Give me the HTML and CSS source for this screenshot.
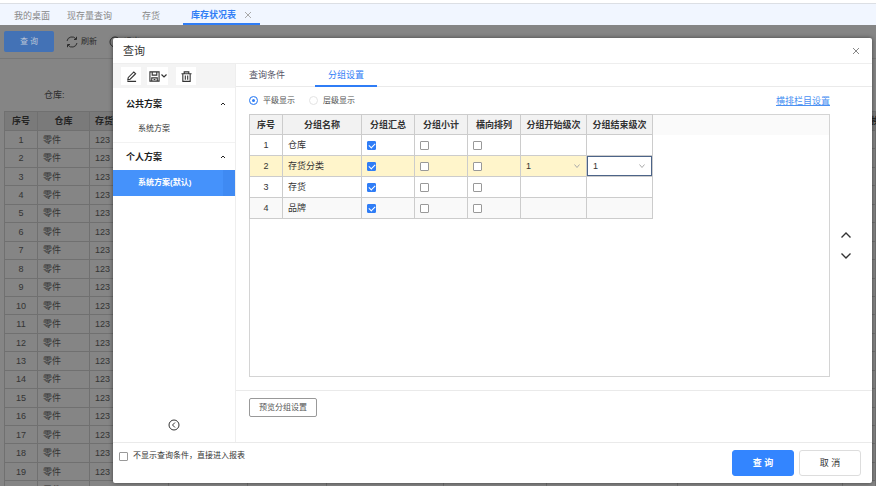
FILE: index.html
```html
<!DOCTYPE html>
<html lang="zh-CN">
<head>
    <meta charset="UTF-8">
    <meta name="viewport" content="width=device-width, initial-scale=1.0">
    <title>库存状况表</title>
    <link rel="stylesheet" href="styles.css">
</head>
<body>
<nav class="page-tabs">
    <a class="page-tab tab-desk" href="#">我的桌面</a>
    <a class="page-tab tab-query" href="#">现存量查询</a>
    <a class="page-tab tab-stock" href="#">存货</a>
    <a class="page-tab active" href="#">库存状况表
        <svg class="tab-close" viewBox="0 0 8 8"><path d="M1 1l6 6M7 1L1 7"/></svg>
    </a>
</nav>

<div class="workspace">
    <div class="toolbar">
        <button class="tool-primary">查 询</button>
        <button class="tool">
            <svg class="tool-icon" viewBox="0 0 12 12"><path d="M1 5a5 5 0 0 1 9-2M11 7a5 5 0 0 1-9 2M10.500.800v2.700H8M1.500 11.200V8.500H4"/></svg>
            刷新
        </button>
        <button class="tool">
            <svg class="tool-icon" viewBox="0 0 12 12"><circle cx="6" cy="6" r="5"/></svg>
            退出
        </button>
    </div>
    <div class="filter">仓库:</div>
    <div class="report">
        <table class="report-table">
            <colgroup>
                <col class="r-no"><col class="r-store"><col class="r-mid"><col class="r-mid"><col class="r-mid">
                <col class="r-wide"><col class="r-name"><col class="r-spec"><col class="r-long"><col>
            </colgroup>
            <thead>
            <tr><th>序号</th><th>仓库</th><th class="left">存货编码</th><th></th><th></th><th></th><th></th><th></th><th></th><th class="unit">换</th></tr>
            </thead>
            <tbody id="reportBody"></tbody>
        </table>
    </div>

    <div class="mask"></div>

    <div class="dialog" role="dialog" aria-labelledby="dialogTitle">
        <div class="dialog-header">
            <h1 id="dialogTitle">查询</h1>
            <button class="icon-btn" aria-label="关闭">
                <svg class="close-icon" viewBox="0 0 8 8"><path d="M1 1l6 6M7 1L1 7"/></svg>
            </button>
        </div>

        <div class="dialog-body">
            <aside class="sidebar">
                <div class="scheme-tools">
                    <button class="scheme-btn" aria-label="编辑">
                        <svg viewBox="0 0 12 12"><path d="M2 9.500l.500-2.500L8.500 1l2 2-6 6zM1.500 11.300h9.500"/></svg>
                    </button>
                    <button class="scheme-btn save" aria-label="保存">
                        <svg viewBox="0 0 12 12"><path d="M1 1h10v10H1zM3.500 1v3.500h5V1M3 11V7.500h6V11M5 9.300h2"/></svg>
                        <svg class="drop-icon" viewBox="0 0 6 6"><path d="M.500 1.500L3 4l2.500-2.500"/></svg>
                    </button>
                    <button class="scheme-btn" aria-label="删除">
                        <svg viewBox="0 0 12 12"><path d="M.500 3h11M3.500 3V1h5v2M2 3v8.300h8V3M4.700 5v4.500M7.300 5v4.500"/></svg>
                    </button>
                </div>
                <div class="scheme-group">公共方案
                    <svg class="fold-icon" viewBox="0 0 8 8"><path d="M2 5l2-2 2 2"/></svg>
                </div>
                <a class="scheme" href="#">系统方案</a>
                <div class="scheme-group">个人方案
                    <svg class="fold-icon" viewBox="0 0 8 8"><path d="M2 5l2-2 2 2"/></svg>
                </div>
                <a class="scheme selected" href="#">系统方案(默认)</a>
                <button class="icon-btn collapse" aria-label="收起">
                    <svg viewBox="0 0 12 12"><circle cx="6" cy="6" r="5"/><path d="M7 3.500L4.500 6 7 8.500"/></svg>
                </button>
            </aside>

            <main class="content">
                <div class="tabs">
                    <a class="tab" href="#">查询条件</a>
                    <a class="tab active" href="#">分组设置</a>
                </div>
                <div class="options">
                    <label class="radio"><input type="radio" name="mode" checked>平级显示</label>
                    <label class="radio"><input type="radio" name="mode">层级显示</label>
                    <a class="column-link" href="#">横排栏目设置</a>
                </div>
                <div class="group-area">
                    <div class="group-panel">
                        <table class="group-table">
                            <colgroup>
                                <col class="g-no"><col class="g-name"><col class="g-check"><col class="g-check"><col class="g-check">
                                <col class="g-level"><col class="g-level">
                            </colgroup>
                            <thead>
                            <tr><th>序号</th><th>分组名称</th><th>分组汇总</th><th>分组小计</th><th>横向排列</th><th>分组开始级次</th><th>分组结束级次</th></tr>
                            </thead>
                            <tbody>
                            <tr>
                                <td class="no">1</td><td>仓库</td>
                                <td><input type="checkbox" aria-label="分组汇总" checked></td>
                                <td><input type="checkbox" aria-label="分组小计"></td>
                                <td><input type="checkbox" aria-label="横向排列"></td>
                                <td></td><td></td>
                            </tr>
                            <tr class="current">
                                <td class="no">2</td><td>存货分类</td>
                                <td><input type="checkbox" aria-label="分组汇总" checked></td>
                                <td><input type="checkbox" aria-label="分组小计"></td>
                                <td><input type="checkbox" aria-label="横向排列"></td>
                                <td class="level">
                                    <div class="picker">
                                        <select aria-label="分组开始级次"><option>1</option></select>
                                        <svg viewBox="0 0 6 6"><path d="M.500 1.500L3 4.500l2.500-3"/></svg>
                                    </div>
                                </td>
                                <td class="level">
                                    <div class="picker editing">
                                        <select aria-label="分组结束级次"><option>1</option></select>
                                        <svg viewBox="0 0 6 6"><path d="M.500 1.500L3 4.500l2.500-3"/></svg>
                                    </div>
                                </td>
                            </tr>
                            <tr>
                                <td class="no">3</td><td>存货</td>
                                <td><input type="checkbox" aria-label="分组汇总" checked></td>
                                <td><input type="checkbox" aria-label="分组小计"></td>
                                <td><input type="checkbox" aria-label="横向排列"></td>
                                <td></td><td></td>
                            </tr>
                            <tr class="striped">
                                <td class="no">4</td><td>品牌</td>
                                <td><input type="checkbox" aria-label="分组汇总" checked></td>
                                <td><input type="checkbox" aria-label="分组小计"></td>
                                <td><input type="checkbox" aria-label="横向排列"></td>
                                <td></td><td></td>
                            </tr>
                            </tbody>
                        </table>
                        <div class="group-rest"></div>
                    </div>
                    <div class="sorter">
                        <button class="icon-btn" aria-label="上移">
                            <svg viewBox="0 0 12 12"><path d="M1.500 8.500L6 4l4.500 4.500"/></svg>
                        </button>
                        <button class="icon-btn" aria-label="下移">
                            <svg viewBox="0 0 12 12"><path d="M1.500 3.500L6 8l4.500-4.500"/></svg>
                        </button>
                    </div>
                </div>
                <div class="preview">
                    <button class="preview-btn">预览分组设置</button>
                </div>
            </main>
        </div>

        <div class="dialog-footer">
            <label class="skip"><input type="checkbox">不显示查询条件，直接进入报表</label>
            <button class="btn primary">查 询</button>
            <button class="btn">取 消</button>
        </div>
    </div>
</div>

<script>
    const reportBody = document.getElementById('reportBody');

    for (let i = 1; i <= 20; i++) {
        const row = document.createElement('tr');
        row.innerHTML = `<td class="no">${i}</td><td>零件</td><td>123</td>` + '<td></td>'.repeat(7);
        reportBody.appendChild(row);
    }
</script>
</body>
</html>
```

FILE: styles.css
```css
* { box-sizing: border-box; }
body {
    margin: 0;
    height: 100vh;
    display: flex;
    flex-direction: column;
    overflow: hidden;
    background: #fff;
    color: #333;
    font: 9px/12px "Liberation Sans", "Noto Sans CJK SC", sans-serif;
}
a { color: inherit; text-decoration: none; }
button, select, input { font: inherit; color: inherit; margin: 0; }
button { padding: 0; border: none; background: none; cursor: pointer; }
svg { display: block; fill: none; stroke: currentColor; }

/* page tabs */
.page-tabs {
    display: flex;
    flex: none;
    height: 25px;
    border-top: 3px solid #fff;
    background: #f1f6ff;
    box-shadow: inset 0 1px #dcdfe4;
    color: #888;
}
.page-tab { display: flex; align-items: center; padding-top: 3px; }
.tab-desk { padding-left: 14px; }
.tab-query { padding-left: 17px; }
.tab-stock { padding-left: 30px; }
.page-tab.active {
    gap: 8px;
    margin-left: 23px;
    padding: 4px 8px 0;
    border-bottom: 2px solid #2f7df6;
    color: #2f7df6;
    font-weight: bold;
}
.tab-close { width: 8px; height: 8px; stroke: #aaa; }

/* report under the mask */
.workspace {
    position: relative;
    flex: 1;
    min-height: 0;
    display: flex;
    flex-direction: column;
    overflow: hidden;
}
.toolbar {
    display: flex;
    flex: none;
    align-items: center;
    gap: 12px;
    height: 34px;
    padding-left: 4px;
    border-bottom: 1px solid #e4e4e4;
}
.tool-primary {
    position: relative;
    z-index: 1;
    width: 50px;
    height: 21px;
    border-radius: 2px;
    background: #4372b6;
    color: #bcc6d6;
    font-size: 8px;
}
.tool { display: flex; align-items: center; gap: 3px; color: #555; font-size: 8px; }
.tool-icon { width: 12px; height: 12px; }
.filter { flex: none; height: 52px; padding: 30px 0 0 44px; color: #555; }
.report { padding-left: 4px; }
.report-table {
    width: 100%;
    height: 389px;
    border-collapse: collapse;
    table-layout: fixed;
    color: #666;
}
.report-table th, .report-table td {
    padding: 0 5px;
    border: 1px solid #d6d6d6;
    text-align: left;
    white-space: nowrap;
}
.report-table th { height: 19px; background: #eaeaea; color: #444; text-align: center; }
.report-table th.left { text-align: left; }
.report-table th.unit { padding: 0 0 0 28px; text-align: left; }
.report-table td.no { text-align: center; }
.r-no { width: 33px; }
.r-store { width: 52px; }
.r-mid { width: 79px; }
.r-wide { width: 117px; }
.r-name { width: 103px; }
.r-spec { width: 131px; }
.r-long { width: 165px; }

.mask { position: absolute; inset: 0; background: rgba(0, 0, 0, 0.48); }

/* dialog */
.dialog {
    position: absolute;
    z-index: 2;
    inset: 13px 4px 3px 113px;
    display: flex;
    flex-direction: column;
    border-radius: 2px;
    background: #fff;
    box-shadow: 0 0 4px rgba(0, 0, 0, 0.5);
}
.dialog-header {
    display: flex;
    flex: none;
    align-items: center;
    justify-content: space-between;
    height: 26px;
    padding: 0 12px 0 10px;
    border-bottom: 1px solid #eee;
}
.dialog-header h1 { margin: 0; font-size: 11px; font-weight: normal; }
.close-icon { width: 8px; height: 8px; stroke: #888; }
.dialog-body { display: flex; flex: 1; min-height: 0; }

/* schemes */
.sidebar {
    display: flex;
    flex: none;
    flex-direction: column;
    width: 123px;
    border-right: 1px solid #eee;
}
.scheme-tools {
    display: flex;
    gap: 6px;
    height: 24px;
    padding: 3px 8px 0;
    background: #f4f4f4;
}
.scheme-btn {
    display: flex;
    align-items: center;
    justify-content: center;
    width: 20px;
    height: 18px;
    background: #fff;
}
.scheme-btn svg { width: 11px; height: 11px; stroke-width: 1.2; }
.scheme-btn.save { gap: 1px; width: 21px; margin-right: 2px; }
.scheme-btn .drop-icon { width: 6px; height: 6px; }
.scheme-group {
    display: flex;
    align-items: center;
    justify-content: space-between;
    height: 28px;
    padding: 3px 8px 0 13px;
    color: #222;
    font-weight: bold;
}
.fold-icon { width: 8px; height: 8px; }
.scheme {
    display: flex;
    align-items: center;
    height: 26px;
    padding-left: 25px;
    font-size: 8px;
}
.scheme + .scheme-group { padding-top: 0; border-top: 1px solid #f2f2f2; }
.scheme.selected {
    border-right: 12px solid #3f8af3;
    background: #4592fb;
    color: #fff;
    font-weight: bold;
}
.collapse { margin: auto auto 11px; }
.collapse svg { width: 12px; height: 12px; }

/* group settings */
.content { display: flex; flex: 1; flex-direction: column; min-width: 0; }
.tabs {
    display: flex;
    flex: none;
    height: 23px;
    padding-left: 13px;
    border-bottom: 1px solid #eaeaea;
}
.tab { display: flex; align-items: center; color: #556; }
.tab.active {
    margin: 0 0 -1px 30px;
    padding: 0 13px;
    border-bottom: 2px solid #2f7df6;
    color: #2f7df6;
}
.options {
    display: flex;
    flex: none;
    align-items: center;
    gap: 14px;
    height: 27px;
    padding: 0 42px 0 13px;
    font-size: 8px;
}
.radio { display: flex; align-items: center; gap: 5px; color: #555; }
.radio input {
    appearance: none;
    width: 9px;
    height: 9px;
    border: 1px solid #e4e4e4;
    border-radius: 50%;
}
.radio input:checked {
    border-color: #4a8ff5;
    background: #2f7df6;
    box-shadow: inset 0 0 0 2px #fff;
}
.column-link {
    margin-left: auto;
    color: #4a90f2;
    font-size: 9px;
    text-decoration: underline;
}
.group-area { display: flex; flex: 1; min-height: 0; padding: 0 0 13px 13px; }
.group-panel { display: flex; flex: 1; align-items: flex-start; border: 1px solid #d4d4d4; }
.group-table {
    flex: none;
    width: 402px;
    margin: -1px 0 0 -1px;
    border-collapse: collapse;
    table-layout: fixed;
}
.group-table th, .group-table td { height: 21px; padding: 0 5px; border: 1px solid #ccc; color: #333; }
.group-table th { height: 20px; padding: 0; background: #f2f2f2; }
.group-table td.no { text-align: center; }
.group-table td.level { padding: 0; }
.group-table .current { background: #fff5cb; }
.group-table .striped { background: #f9f9f9; }
.group-rest { flex: 1; height: 20px; background: #fafafa; }
.g-no { width: 33px; }
.g-name { width: 79px; }
.g-check { width: 53px; }
.g-level { width: 66px; }
input[type="checkbox"] {
    display: block;
    appearance: none;
    width: 9px;
    height: 9px;
    border: 1px solid #999;
    border-radius: 1px;
    background: #fff;
}
input[type="checkbox"]:checked { border-color: #2f7df6; background: #2f7df6; }
input[type="checkbox"]:checked::before {
    content: "";
    display: block;
    width: 5px;
    height: 3px;
    margin: 1px;
    border: solid #fff;
    border-width: 0 0 1px 1px;
    transform: rotate(-45deg);
}
.picker { display: grid; align-items: center; height: 20px; }
.picker select, .picker svg { grid-area: 1 / 1; }
.picker select {
    appearance: none;
    width: 100%;
    height: 100%;
    padding: 0 5px;
    border: none;
    border-radius: 0;
    background: none;
}
.picker svg { justify-self: end; width: 6px; height: 6px; margin-right: 6px; stroke: #aaa; pointer-events: none; }
.picker.editing { border: 1px solid #4c6488; background: #fff; }
.sorter {
    display: flex;
    flex: none;
    flex-direction: column;
    justify-content: center;
    gap: 9px;
    width: 42px;
    padding-left: 10px;
}
.sorter .icon-btn { width: 12px; height: 12px; }
.sorter svg { stroke-width: 1.4; }
.preview { flex: none; height: 52px; padding: 7px 13px; border-top: 1px solid #eaeaea; }
.preview-btn {
    height: 19px;
    padding: 0 9px;
    border: 1px solid #999;
    border-radius: 2px;
    color: #555;
    font-size: 8px;
}

/* footer */
.dialog-footer {
    display: flex;
    flex: none;
    gap: 5px;
    height: 41px;
    padding: 7px 11px 0 6px;
    border-top: 1px solid #eaeaea;
}
.skip {
    display: flex;
    align-items: center;
    gap: 5px;
    height: 12px;
    margin-right: auto;
    font-size: 8px;
}
.btn {
    width: 62px;
    height: 26px;
    border: 1px solid #ddd;
    border-radius: 3px;
    background: #fff;
}
.btn.primary { border-color: #3385ff; background: #3385ff; color: #fff; font-weight: bold; }
```
